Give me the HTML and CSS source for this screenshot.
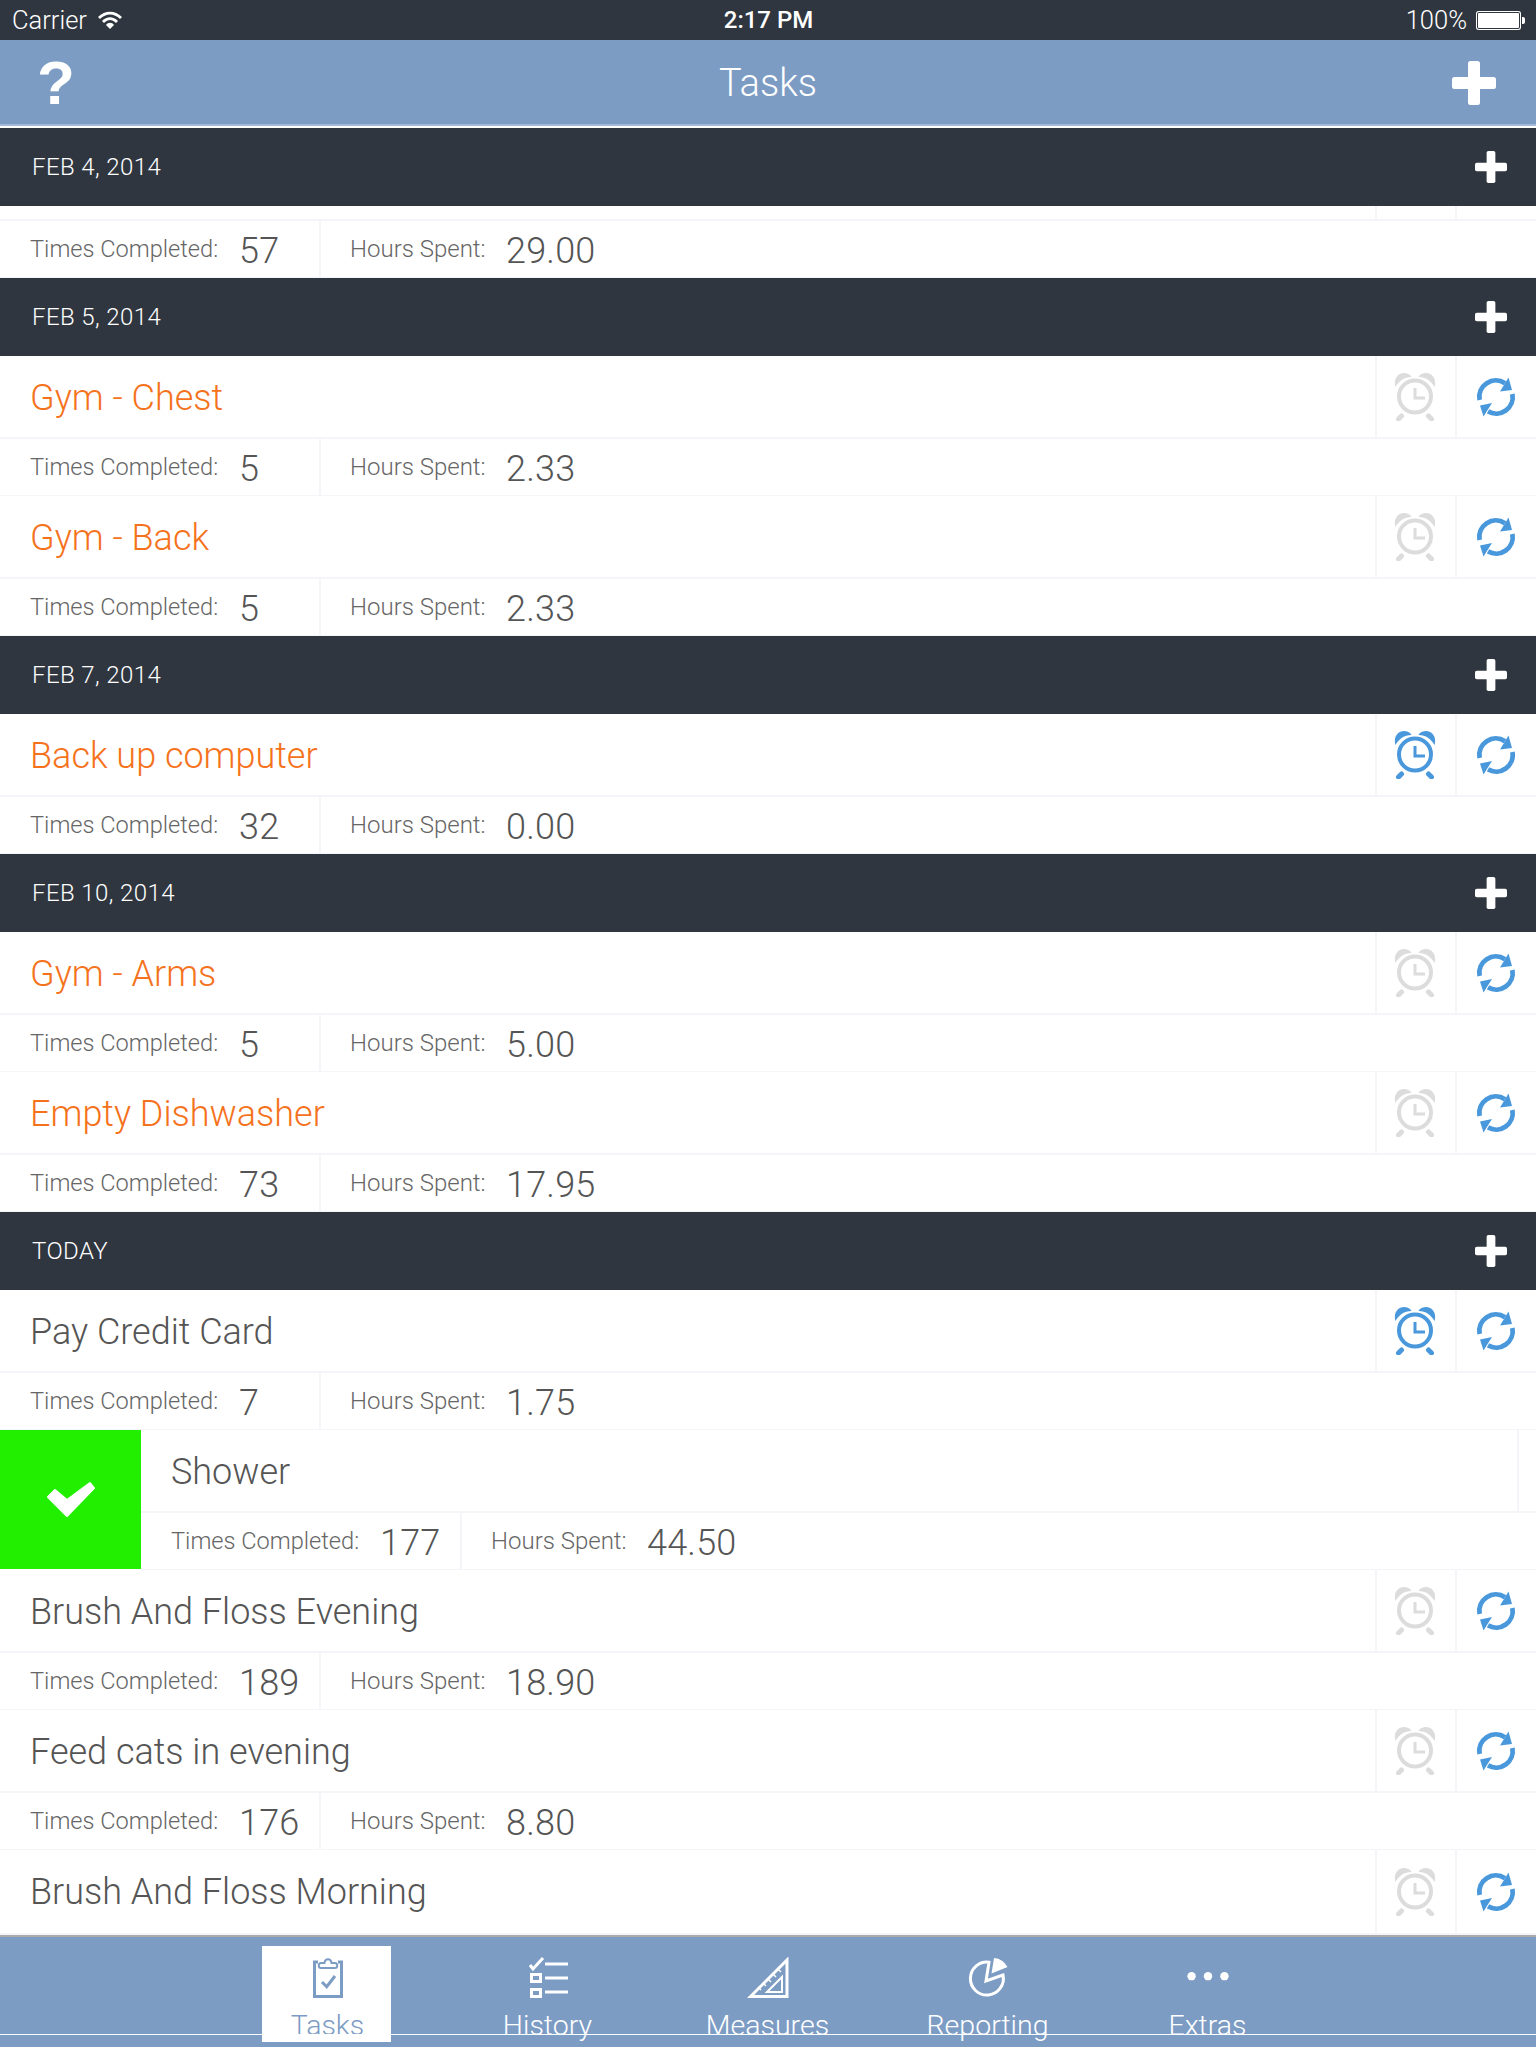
FILE: index.html
```html
<!DOCTYPE html>
<html lang="en">
<head>
    <meta charset="UTF-8">
    <meta name="viewport" content="width=device-width, initial-scale=1.0">
    <title>Tasks</title>
    <link rel="stylesheet" href="styles.css">
</head>
<body>
    <svg class="defs" width="0" height="0">
        <symbol id="plus" viewBox="0 0 44 44">
            <rect x="16" y="0" width="12" height="44" rx="2.5"/>
            <rect x="0" y="16" width="44" height="12" rx="2.5"/>
        </symbol>
        <symbol id="clock" viewBox="0 0 42 48">
            <path d="M1.5 14C-1 6 4 0 10 0 13 0 16 1 17.5 4 10 4 5 8 1.5 14ZM40.5 14C43 6 38 0 32 0 29 0 26 1 24.5 4 32 4 37 8 40.5 14Z"/>
            <circle class="ring" cx="21" cy="23.5" r="16"/>
            <path class="hand" d="M21 15V25H31"/>
            <path class="foot" d="M4.5 46 7.5 43M37.5 46 34.5 43"/>
        </symbol>
        <symbol id="sync" viewBox="0 0 40 40">
            <path class="arc" d="M3.6 23A16.5 16.5 0 0 1 29 6.2"/>
            <path class="arc" d="M36.4 17A16.5 16.5 0 0 1 12 34.4"/>
            <path d="M32.5 0.5 36 13 24 14.5ZM7.5 39.5 4 28.5 16 26Z"/>
        </symbol>
    </svg>

    <div class="status">
        <div class="status-left">
            <span>Carrier</span>
            <svg class="wifi" viewBox="0 0 24 18"><path d="M0 6C7-1 17-1 24 6L22 8C16 2 8 2 2 8ZM4 10C9 5 15 5 20 10L18 12C14 8 10 8 6 12ZM8 14C10 11 14 11 16 14L12 18Z"/></svg>
        </div>
        <div class="status-time">2:17 PM</div>
        <div class="status-right">
            <span>100%</span>
            <div class="battery"></div>
        </div>
    </div>

    <div class="nav">
        <span class="nav-help">?</span>
        <span class="nav-title">Tasks</span>
        <svg class="nav-plus"><use href="#plus"/></svg>
    </div>

    <div class="list">
        <div class="header"><span>FEB 4, 2014</span><svg><use href="#plus"/></svg></div>
        <div class="top top-cut"><div class="name"></div><div class="action"></div><div class="action"></div></div>
        <div class="stats"><div class="times"><label>Times Completed:</label><b>57</b></div><div class="hours"><label>Hours Spent:</label><b>29.00</b></div></div>

        <div class="header"><span>FEB 5, 2014</span><svg><use href="#plus"/></svg></div>
        <div class="top"><div class="name late">Gym - Chest</div><div class="action"><svg class="clock"><use href="#clock"/></svg></div><div class="action"><svg class="sync"><use href="#sync"/></svg></div></div>
        <div class="stats"><div class="times"><label>Times Completed:</label><b>5</b></div><div class="hours"><label>Hours Spent:</label><b>2.33</b></div></div>
        <div class="top"><div class="name late">Gym - Back</div><div class="action"><svg class="clock"><use href="#clock"/></svg></div><div class="action"><svg class="sync"><use href="#sync"/></svg></div></div>
        <div class="stats"><div class="times"><label>Times Completed:</label><b>5</b></div><div class="hours"><label>Hours Spent:</label><b>2.33</b></div></div>

        <div class="header"><span>FEB 7, 2014</span><svg><use href="#plus"/></svg></div>
        <div class="top"><div class="name late">Back up computer</div><div class="action"><svg class="clock on"><use href="#clock"/></svg></div><div class="action"><svg class="sync"><use href="#sync"/></svg></div></div>
        <div class="stats"><div class="times"><label>Times Completed:</label><b>32</b></div><div class="hours"><label>Hours Spent:</label><b>0.00</b></div></div>

        <div class="header"><span>FEB 10, 2014</span><svg><use href="#plus"/></svg></div>
        <div class="top"><div class="name late">Gym - Arms</div><div class="action"><svg class="clock"><use href="#clock"/></svg></div><div class="action"><svg class="sync"><use href="#sync"/></svg></div></div>
        <div class="stats"><div class="times"><label>Times Completed:</label><b>5</b></div><div class="hours"><label>Hours Spent:</label><b>5.00</b></div></div>
        <div class="top"><div class="name late">Empty Dishwasher</div><div class="action"><svg class="clock"><use href="#clock"/></svg></div><div class="action"><svg class="sync"><use href="#sync"/></svg></div></div>
        <div class="stats"><div class="times"><label>Times Completed:</label><b>73</b></div><div class="hours"><label>Hours Spent:</label><b>17.95</b></div></div>

        <div class="header"><span>TODAY</span><svg><use href="#plus"/></svg></div>
        <div class="top"><div class="name">Pay Credit Card</div><div class="action"><svg class="clock on"><use href="#clock"/></svg></div><div class="action"><svg class="sync"><use href="#sync"/></svg></div></div>
        <div class="stats"><div class="times"><label>Times Completed:</label><b>7</b></div><div class="hours"><label>Hours Spent:</label><b>1.75</b></div></div>

        <div class="swiped">
            <div class="done"><svg viewBox="0 0 48 36"><path d="M1 15 8 8 20 18 43 1 47 6 20 34Z"/></svg></div>
            <div class="swiped-body">
                <div class="top"><div class="name">Shower</div><div class="edge"></div></div>
                <div class="stats"><div class="times"><label>Times Completed:</label><b>177</b></div><div class="hours"><label>Hours Spent:</label><b>44.50</b></div></div>
            </div>
        </div>

        <div class="top"><div class="name">Brush And Floss Evening</div><div class="action"><svg class="clock"><use href="#clock"/></svg></div><div class="action"><svg class="sync"><use href="#sync"/></svg></div></div>
        <div class="stats"><div class="times"><label>Times Completed:</label><b>189</b></div><div class="hours"><label>Hours Spent:</label><b>18.90</b></div></div>
        <div class="top"><div class="name">Feed cats in evening</div><div class="action"><svg class="clock"><use href="#clock"/></svg></div><div class="action"><svg class="sync"><use href="#sync"/></svg></div></div>
        <div class="stats"><div class="times"><label>Times Completed:</label><b>176</b></div><div class="hours"><label>Hours Spent:</label><b>8.80</b></div></div>
        <div class="top top-last"><div class="name">Brush And Floss Morning</div><div class="action"><svg class="clock"><use href="#clock"/></svg></div><div class="action"><svg class="sync"><use href="#sync"/></svg></div></div>
    </div>

    <div class="tabs">
        <div class="tab active">
            <svg viewBox="0 0 32 42"><path class="line" d="M6 5H2.5V39.5H29.5V5H26"/><path class="line thin-2" d="M9 11C6 11 6 6 9 6H12.5C13 1 19 1 19.5 6H23C26 6 26 11 23 11Z"/><path class="line" d="M10 25 14.7 29.7 23 19"/></svg>
            <span>Tasks</span>
        </div>
        <div class="tab">
            <svg viewBox="0 0 40 42"><path class="line" d="M2 8 5 12 15 1M17 7H40M17 21H40M17 35H40"/><rect class="line" x="3.5" y="17.5" width="9" height="7"/><rect class="line" x="3.5" y="32.5" width="9" height="7"/></svg>
            <span>History</span>
        </div>
        <div class="tab">
            <svg viewBox="0 0 42 42"><path class="line" d="M40 3V39.5H3.5Z"/><path class="line thin-2" d="M35 20V35H20Z"/><path class="thin" d="M31 12 34 15M26 17 29 20M21 22 24 25M16 26 19 29M11 30 14 33"/></svg>
            <span>Measures</span>
        </div>
        <div class="tab">
            <svg viewBox="0 0 42 42"><path class="line" d="M22 5.2 19 24 36 18A16.5 16.5 0 1 1 22 5.2Z"/><path class="fill" d="M27 1A17 17 0 0 1 40.5 10L24.5 16.5Z"/></svg>
            <span>Reporting</span>
        </div>
        <div class="tab">
            <svg viewBox="0 0 46 42"><circle class="fill" cx="5" cy="19" r="4.6"/><circle class="fill" cx="23" cy="19" r="4.6"/><circle class="fill" cx="41" cy="19" r="4.6"/></svg>
            <span>Extras</span>
        </div>
        <div class="tab-line"></div>
    </div>
</body>
</html>
```
FILE: styles.css
```css
* { box-sizing: border-box; }
html, body { margin: 0; padding: 0; }
body { width: 1536px; height: 2048px; overflow: hidden; background: #fff; font-family: Roboto, "Liberation Sans", sans-serif; font-weight: 300; color: #555; }
.defs { position: absolute; }

.status { height: 40px; background: #30363f; color: #fff; display: flex; align-items: center; justify-content: space-between; padding: 0 11px 0 12px; font-size: 25.5px; }
.status-left, .status-right { flex: 1; display: flex; align-items: center; }
.status-right { justify-content: flex-end; }
.status-time { font-weight: 500; font-size: 24px; }
.wifi { width: 24px; height: 18px; margin-left: 11px; fill: #fff; }
.battery { position: relative; width: 45px; height: 19px; margin-left: 9px; margin-right: 4px; background: #fff; border-radius: 3px; box-shadow: inset 0 0 0 1px #fff, inset 0 0 0 2px #30363f; }
.battery::after { content: ""; position: absolute; left: 46px; top: 6px; width: 3px; height: 7px; background: #fff; border-radius: 0 2px 2px 0; }

.nav { height: 88px; background: #7c9cc4; border-bottom: 2px solid #fff; box-shadow: inset 0 -4px 0 -2px #a3bbd9; display: flex; align-items: center; justify-content: space-between; padding: 0 40px 0 37px; color: #fff; }
.nav-help { width: 47px; font-family: "Liberation Sans", sans-serif; font-weight: 700; font-size: 62px; line-height: 84px; }
.nav-title { font-size: 38px; }
.nav-plus { width: 44px; height: 44px; fill: #fff; }

.header { height: 78px; background: #30363f; color: #fff; font-size: 24px; letter-spacing: 0.4px; display: flex; align-items: center; justify-content: space-between; padding: 0 29px 0 32px; }
.header svg { width: 32px; height: 32px; fill: #fff; }

.top { height: 83px; display: flex; border-bottom: 2px solid #f3f5f9; }
.top-cut { height: 15px; }
.top-last { height: 85px; }
.name { flex: 1; padding-left: 30px; font-size: 36px; line-height: 84px; }
.late { color: #f5721c; }
.action { width: 80px; border-left: 2px solid #f3f5f9; display: flex; align-items: center; justify-content: center; }
.action:last-child { width: 81px; }
.edge { width: 19px; border-left: 2px solid #f3f5f9; }

.clock { width: 42px; height: 48px; margin-right: 2px; color: #dcdcdc; fill: currentColor; }
.clock.on { color: #4a98dc; }
.sync { width: 40px; height: 40px; margin-right: 2px; color: #4a98dc; fill: currentColor; }

#clock .ring { fill: none; stroke: currentColor; stroke-width: 4; }
#clock .hand { fill: none; stroke: currentColor; stroke-width: 3; }
#clock .foot { fill: none; stroke: currentColor; stroke-width: 5; stroke-linecap: round; }
#sync .arc { fill: none; stroke: currentColor; stroke-width: 4.8; }

.stats { height: 57px; display: flex; border-bottom: 1px solid #f3f5f9; }
.times { width: 321px; padding-left: 30px; display: flex; align-items: center; border-right: 2px solid #f3f5f9; }
.hours { padding-left: 29px; display: flex; align-items: center; }
.stats label { font-size: 24px; color: #666; }
.times label { width: 209px; font-size: 23.6px; }
.hours label { width: 156px; }
.stats b { font-size: 36px; font-weight: 300; letter-spacing: 0.2px; padding-top: 4px; }

.swiped { display: flex; }
.done { width: 141px; height: 139px; background: #22ee00; display: flex; align-items: center; justify-content: center; }
.done svg { width: 48px; height: 36px; fill: #fff; stroke: #fff; stroke-width: 2; stroke-linejoin: round; }
.swiped-body { flex: 1; }

.tabs { position: relative; height: 112px; background: #7c9cc4; border-top: 2px solid #aaa; display: flex; justify-content: center; gap: 91px; padding: 9px 3px 0 0; }
.tab { position: relative; z-index: 1; width: 129px; height: 96px; display: flex; flex-direction: column; align-items: center; color: #fff; font-size: 28.5px; padding: 11px 0 0 2px; }
.tab svg { width: 42px; height: 42px; flex: none; }
.tab span { line-height: 38px; margin-top: 8px; }
.tab.active { background: #fff; color: #7c9cc4; }
.line { fill: none; stroke: currentColor; stroke-width: 3; }
.line.thin-2 { stroke-width: 2; }
.thin { fill: none; stroke: currentColor; stroke-width: 1.5; }
.fill { fill: currentColor; }
.tab-line { position: absolute; left: 0; right: 0; top: 97px; height: 1px; background: #fff; z-index: 2; }
```
